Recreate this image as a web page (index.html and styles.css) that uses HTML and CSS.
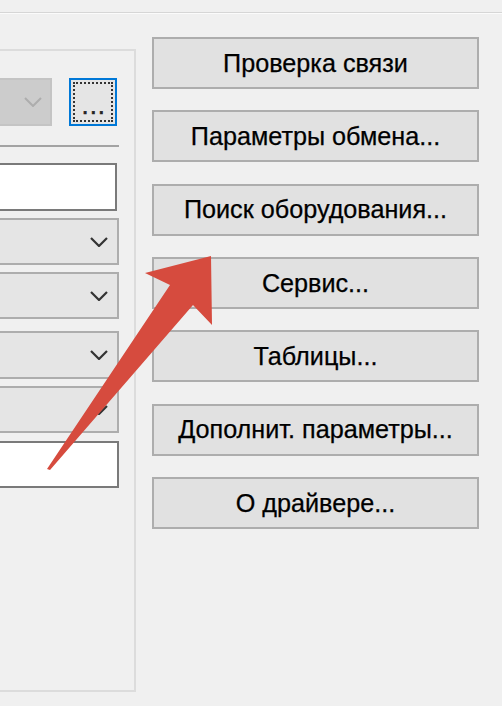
FILE: index.html
```html
<!DOCTYPE html>
<html lang="ru">
<head>
<meta charset="utf-8">
<title>Драйвер</title>
<link rel="stylesheet" href="styles.css">
</head>
<body>
<div class="page">
  <div class="top-rule"></div>
  <div class="main">
    <div class="group">
      <div class="row-first">
        <div class="combo combo-disabled">
          <svg class="chev" width="18" height="10" viewBox="0 0 18 10"><polyline points="1,1 9,9 17,1" fill="none" stroke="#adadad" stroke-width="2"/></svg>
        </div>
        <div class="btn-dots">...</div>
      </div>
      <div class="sep"></div>
      <div class="input"></div>
      <div class="combo">
        <svg class="chev" width="18" height="10" viewBox="0 0 18 10"><polyline points="1,1 9,9 17,1" fill="none" stroke="#333" stroke-width="2.2"/></svg>
      </div>
      <div class="combo">
        <svg class="chev" width="18" height="10" viewBox="0 0 18 10"><polyline points="1,1 9,9 17,1" fill="none" stroke="#333" stroke-width="2.2"/></svg>
      </div>
      <div class="combo combo-gap">
        <svg class="chev" width="18" height="10" viewBox="0 0 18 10"><polyline points="1,1 9,9 17,1" fill="none" stroke="#333" stroke-width="2.2"/></svg>
      </div>
      <div class="combo">
        <svg class="chev" width="18" height="10" viewBox="0 0 18 10"><polyline points="1,1 9,9 17,1" fill="none" stroke="#333" stroke-width="2.2"/></svg>
      </div>
      <div class="input input-last"></div>
    </div>
    <div class="buttons">
      <div class="btn">Проверка связи</div>
      <div class="btn">Параметры обмена...</div>
      <div class="btn">Поиск оборудования...</div>
      <div class="btn">Сервис...</div>
      <div class="btn">Таблицы...</div>
      <div class="btn">Дополнит. параметры...</div>
      <div class="btn">О драйвере...</div>
    </div>
  </div>
  <svg class="arrow" width="502" height="706" viewBox="0 0 502 706">
    <polygon points="47,457 170,273 145,261 211,244 212,313 193,293 50,458" fill="#d64b3e"/>
  </svg>
</div>
</body>
</html>
```
FILE: styles.css
```css
html, body {
  margin: 0;
  padding: 0;
}
body {
  background: #f0f0f0;
  width: 502px;
  height: 706px;
  overflow: hidden;
  font-family: "Liberation Sans", Arial, sans-serif;
  color: #000;
}
.page {
  position: relative;
  width: 502px;
  height: 706px;
}
.top-rule {
  height: 0;
  margin-top: 12px;
  border-top: 1px solid #d6d6d6;
  border-bottom: 1px solid #fbfbfb;
}
.main {
  display: flex;
  align-items: flex-start;
}
.group {
  box-sizing: border-box;
  width: 176px;
  height: 643px;
  margin-left: -40px;
  margin-top: 35px;
  border: 2px solid #dcdcdc;
  padding: 27px 15px 0 0;
  display: flex;
  flex-direction: column;
}
.row-first {
  display: flex;
  align-items: center;
  gap: 17px;
  margin-right: 2px;
  height: 48px;
}
.combo {
  box-sizing: border-box;
  height: 47px;
  margin-top: 7px;
  background: #e5e5e5;
  border: 2px solid #adadad;
  display: flex;
  align-items: center;
  justify-content: flex-end;
  padding-right: 9px;
}
.combo-gap {
  margin-top: 12px;
  height: 48px;
}
.combo-disabled {
  flex: 1;
  margin-top: 0;
  height: 48px;
  background: #cccccc;
  border-color: #c4c4c4;
  padding-right: 8px;
}
.btn-dots {
  box-sizing: border-box;
  width: 48px;
  height: 48px;
  border: 2px solid #0078d7;
  background: #e5e5e5;
  outline: 2px dotted #333;
  outline-offset: -6px;
  font-size: 24px;
  line-height: 40px;
  padding-top: 6px;
  padding-left: 2px;
  text-align: center;
  letter-spacing: 1.5px;
  color: #222;
  -webkit-text-stroke: 0.6px #222;
}
.sep {
  height: 2px;
  margin-top: 19px;
  background: #a3a3a3;
}
.input {
  box-sizing: border-box;
  height: 48px;
  margin-top: 16px;
  margin-right: 2px;
  background: #ffffff;
  border: 2px solid #7a7a7a;
}
.input-last {
  margin-top: 8px;
  height: 47px;
  margin-right: 0;
}
.buttons {
  margin-left: 16px;
  margin-top: 23px;
  width: 327px;
  display: flex;
  flex-direction: column;
  gap: 21.35px;
}
.btn {
  box-sizing: border-box;
  height: 52px;
  background: #e1e1e1;
  border: 2px solid #adadad;
  display: flex;
  align-items: center;
  justify-content: center;
  font-size: 25.2px;
  -webkit-text-stroke: 0.25px #000;
  white-space: nowrap;
}
.arrow {
  position: absolute;
  left: 0;
  top: 0;
  pointer-events: none;
}
```
